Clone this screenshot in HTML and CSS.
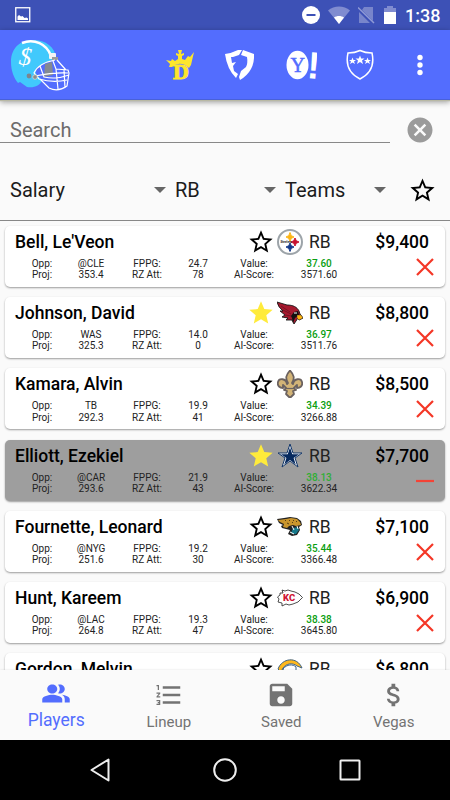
FILE: index.html
```html
<!DOCTYPE html>
<html lang="en">
  <head>
    <meta charset="utf-8" />
    <title>Players</title>
    <link rel="stylesheet" href="styles.css">
  </head>
  <body>
    <svg class="sprite">
      <symbol id="star" viewBox="0 0 24 24">
        <path d="M22 9.24l-7.19-.62L12 2 9.19 8.63 2 9.24l5.46 4.73L5.82 21 12 17.27 18.18 21l-1.63-7.03L22 9.24zM12 15.4l-3.76 2.27 1-4.28-3.32-2.88 4.38-.38L12 6.1l1.71 4.04 4.38.38-3.32 2.88 1 4.28L12 15.4z" />
      </symbol>
      <symbol id="star-full" viewBox="0 0 24 24">
        <path d="M12 17.27L18.18 21l-1.64-7.03L22 9.24l-7.19-.61L12 2 9.19 8.63 2 9.24l5.46 4.73L5.82 21z" />
      </symbol>
      <symbol id="cross" viewBox="0 0 18 18">
        <path d="M1 1L17 17M17 1L1 17" fill="none" stroke="#f43626" stroke-width="2.200" />
      </symbol>
      <symbol id="minus" viewBox="0 0 18 18">
        <path d="M0 9H18" fill="none" stroke="#f44336" stroke-width="2.200" />
      </symbol>
    </svg>

    <div class="status-bar">
      <svg class="picture" width="16" height="16" viewBox="0 0 16 16">
        <rect x=".75" y=".75" width="14" height="14" fill="none" stroke="#fff" stroke-width="1.300" />
        <path d="M2.500 13V9.500L4 8L6 9.500L7.500 9L9.500 11L11.500 10.500L13 11.500V13z" fill="#fff" />
      </svg>
      <svg width="18" height="18" viewBox="0 0 18 18">
        <circle cx="9" cy="9" r="9" fill="#fff" />
        <path d="M4.500 9H13.500" stroke="#3d51b6" stroke-width="2" />
      </svg>
      <svg width="22" height="18" viewBox="0 0 22 18">
        <path d="M11 18L0 4.500C6 -1 16 -1 22 4.500z" fill="#808cd0" />
        <path d="M11 18L6 11.500C9 9.500 13 9.500 16 11.500z" fill="#fff" />
      </svg>
      <svg width="17" height="18" viewBox="0 0 17 18">
        <path d="M6 1H15V15L4 4z M1 6L12 17H1z" fill="#7885cb" />
        <path d="M0 1.500L16 17" stroke="#8f9ad6" stroke-width="1.500" />
      </svg>
      <svg width="14" height="18" viewBox="0 0 14 18">
        <path d="M4 0H10V2H13V8H1V2H4z" fill="#808cd0" />
        <path d="M1 6H13V18H1z" fill="#fff" />
      </svg>
      <span class="clock">1:38</span>
    </div>

    <div class="app-bar">
      <svg class="helmet" width="62" height="54" viewBox="10 38 62 54">
        <path d="M11 62C11 48 20 40 33 40C46 40 55 47 56 58L43 64C35 67 34 71 37 75L42 80C40 86 34 88 27 87L20 82L18 83C14 78 11 71 11 62z" fill="#41c9fc" />
        <path d="M22 43C34 38 47 44 51 56" fill="none" stroke="#fff" stroke-width="2.500" />
        <path d="M45 64L52 62L53 75L44 77z" fill="#858a91" />
        <rect x="49" y="53" width="7" height="6" rx="1" fill="#f4f4f4" />
        <rect x="52" y="57" width="6" height="3" fill="#9b9b9b" />
        <path d="M55 60C45 62 37 66 34 73L39 79C49 82 58 82 67 80M40 66L44 77C53 79 61 78 69 75M53 61L56 69L68 70L69 73L67 86C60 91 53 90 49 88L40 79M57 60L66 70M56 69L58 89M35 76C45 74 56 72 68 73M64 70L65 88" fill="none" stroke="#fff" stroke-width="1.200" />
        <circle cx="29" cy="76" r="2.400" fill="#7e858d" />
        <circle cx="35" cy="77" r="2.300" fill="#8d8d8d" stroke="#ddd" stroke-width=".7" />
        <text x="19" y="65" class="helmet-sign" transform="rotate(6 26 57)">$</text>
      </svg>
      <div class="sites">
        <svg width="30" height="32" viewBox="0 0 30 32">
          <path d="M1 11L6 12L7 10L10 12L13 10V7L11 6V4L14 5L13 1H17L16 5L19 4V6L17 7V10L20 11L23 7L25 8L29 3L26 16L24 19Q15 11 7 18L4 18L5 15z" fill="#fde62d" />
          <text x="8" y="30" class="draft-letter">D</text>
        </svg>
        <svg width="32" height="32" viewBox="0 0 32 32">
          <path d="M1 5Q8 4 14 1L18 1L15 6L9 8L7 8L8 14L12 13L9 17L10 22L14 25L12 29Q3 20 1 5z" fill="#fff" />
          <path d="M19 1L30 5Q31 22 16 31L15 28L17 22L22 18Q24 14 23 8L17 6z" fill="#fff" />
        </svg>
        <svg width="32" height="32" viewBox="0 0 32 32">
          <ellipse cx="12.500" cy="16" rx="11" ry="14.300" fill="#fff" />
          <text x="5.500" y="23" class="yahoo-letter">Y</text>
          <text x="22" y="29.500" class="yahoo-mark" transform="rotate(5 27 20)">!</text>
        </svg>
        <svg width="28" height="32" viewBox="0 0 28 32">
          <path d="M2 4Q9 4 14 1.500Q19 4 26 4Q30 22 14 30Q-2 22 2 4z" fill="none" stroke="#fff" stroke-width="1.500" />
          <path d="M14 6.500L15.200 9.500H18.500L16 11.600L17 15L14 13L11 15L12 11.600L9.500 9.500H12.800zM6.500 8.500L7.500 11H10L8 12.600L9 15L6.500 13.500L4 15L5 12.600L3 11H5.500zM21.500 8.500L22.500 11H25L23 12.600L24 15L21.500 13.500L19 15L20 12.600L18 11H20.500z" fill="#fff" />
        </svg>
      </div>
      <svg class="more" width="6" height="22" viewBox="0 0 6 22">
        <circle cx="3" cy="3.500" r="2.700" />
        <circle cx="3" cy="11" r="2.700" />
        <circle cx="3" cy="18.500" r="2.700" />
      </svg>
    </div>

    <div class="search">
      <div class="search-field">Search</div>
      <svg width="30" height="30" viewBox="0 0 24 24">
        <path fill="#9b9b9b" d="M12 2C6.470 2 2 6.470 2 12s4.470 10 10 10 10-4.470 10-10S17.530 2 12 2zm5 13.590L15.590 17 12 13.410 8.410 17 7 15.590 10.590 12 7 8.410 8.410 7 12 10.590 15.590 7 17 8.410 13.410 12 17 15.590z" />
      </svg>
    </div>

    <div class="filters">
      <div class="dropdown">Salary</div>
      <div class="dropdown">RB</div>
      <div class="dropdown">Teams</div>
      <svg class="filter-star" width="29" height="29"><use href="#star" /></svg>
    </div>

    <div class="players" id="players"></div>

    <div class="tabs">
      <div class="tab active">
        <svg width="30" height="30" viewBox="0 0 24 24">
          <path d="M16.670 13.130C18.040 14.060 19 15.320 19 17v3h4v-3c0-2.180-3.570-3.470-6.330-3.870zM15 12c2.210 0 4-1.790 4-4s-1.790-4-4-4c-.47 0-.91.100-1.330.24C14.500 5.270 15 6.580 15 8s-.5 2.730-1.330 3.760c.42.140.86.240 1.330.240zM9 12c2.210 0 4-1.790 4-4s-1.790-4-4-4-4 1.790-4 4 1.790 4 4 4zM9 13c-2.670 0-8 1.340-8 4v3h16v-3c0-2.660-5.330-4-8-4z" transform="matrix(1 0 0 .9 0 1.600)" />
        </svg>
        <span>Players</span>
      </div>
      <div class="tab">
        <svg width="30" height="30" viewBox="0 0 24 24">
          <path d="M2 17h2v.5H3v1h1v.5H2v1h3v-4H2v1zm1-9h1V4H2v1h1v3zm-1 3h1.800L2 13.100v.9h3v-1H3.200L5 10.900V10H2v1zm5-6v2h14V5H7zm0 14h14v-2H7v2zm0-6h14v-2H7v2z" />
        </svg>
        <span>Lineup</span>
      </div>
      <div class="tab">
        <svg width="30" height="30" viewBox="0 0 24 24">
          <path d="M17 3H5c-1.110 0-2 .9-2 2v14c0 1.100.89 2 2 2h14c1.100 0 2-.9 2-2V7l-4-4zm-5 16c-1.660 0-3-1.340-3-3s1.340-3 3-3 3 1.340 3 3-1.340 3-3 3zm3-10H5V5h10v4z" />
        </svg>
        <span>Saved</span>
      </div>
      <div class="tab">
        <svg width="30" height="30" viewBox="0 0 24 24">
          <path d="M11.800 10.900c-2.270-.59-3-1.200-3-2.150 0-1.090 1.010-1.850 2.700-1.850 1.780 0 2.440.85 2.500 2.100h2.210c-.07-1.720-1.120-3.300-3.210-3.810V3h-3v2.160c-1.940.42-3.500 1.680-3.500 3.610 0 2.310 1.910 3.460 4.700 4.130 2.500.6 3 1.480 3 2.410 0 .69-.49 1.790-2.700 1.790-2.060 0-2.870-.92-2.980-2.100h-2.200c.12 2.190 1.760 3.420 3.680 3.830V21h3v-2.150c1.950-.37 3.500-1.500 3.500-3.550 0-2.840-2.430-3.810-4.700-4.400z" />
        </svg>
        <span>Vegas</span>
      </div>
    </div>

    <div class="nav-bar">
      <svg width="24" height="26" viewBox="0 0 24 26">
        <path d="M20.500 2.500V23.500L3.500 13z" />
      </svg>
      <svg width="26" height="26" viewBox="0 0 26 26">
        <circle cx="13" cy="13" r="10.800" />
      </svg>
      <svg width="24" height="26" viewBox="0 0 24 26">
        <rect x="2.500" y="3.500" width="19" height="19" rx=".5" />
      </svg>
    </div>

    <script src="script.js"></script>
  </body>
</html>
```
FILE: styles.css
```css
body {
  display: flex;
  flex-direction: column;
  width: 450px;
  height: 800px;
  margin: 0;
  overflow: hidden;
  background-color: #fafafa;
  color: #000;
  font-family: Roboto, "Liberation Sans", sans-serif;
}

svg {
  display: block;
  flex: none;
}

.sprite {
  position: absolute;
  width: 0;
  height: 0;
}

.status-bar {
  display: flex;
  flex: none;
  align-items: center;
  height: 30px;
  padding: 0 9px 0 15px;
  box-sizing: border-box;
  background-color: #3d51b6;
  color: #fff;
}

.status-bar svg {
  margin-right: 8px;
}

.status-bar .picture {
  margin-right: auto;
}

.clock {
  width: 36px;
  font-size: 18px;
  font-weight: 500;
}

.app-bar {
  z-index: 1;
  display: flex;
  flex: none;
  align-items: center;
  height: 70px;
  padding: 0 27px 0 10px;
  box-sizing: border-box;
  background-color: #536dfe;
  border-bottom: 1px solid #4961d8;
  box-shadow: 0 1px 1px #b9b9a4, 0 2px 6px rgba(0, 0, 0, 0.4);
}

.helmet-sign {
  fill: #fff;
  font: italic 25px "Liberation Serif", serif;
}

.sites {
  display: flex;
  justify-content: space-between;
  width: 209px;
  margin: 0 43px 0 auto;
}

.draft-letter {
  fill: #fde62d;
  stroke: #fde62d;
  font: bold 22px "Liberation Serif", serif;
}

.yahoo-letter {
  fill: #536dfe;
  font: 20px "Liberation Serif", serif;
  stroke: #536dfe;
  stroke-width: 0.5px;
}

.yahoo-mark {
  fill: #fff;
  font: bold 38px "Liberation Sans", sans-serif;
}

.more {
  fill: #fff;
}

.search {
  display: flex;
  flex: none;
  align-items: center;
  justify-content: space-between;
  height: 60px;
  padding-right: 15px;
}

.search-field {
  width: 380px;
  height: 24px;
  padding-left: 10px;
  border-bottom: 1px solid #888;
  color: #6c6c6c;
  font-size: 20px;
  line-height: 25px;
}

.filters {
  display: grid;
  grid-template-columns: 165px 110px 125px 29px;
  flex: none;
  align-items: center;
  height: 60px;
  padding-left: 10px;
  border-bottom: 1px solid #888;
}

.filter-star {
  margin-left: -2px;
}

.dropdown {
  display: flex;
  align-items: center;
  justify-content: space-between;
  padding-right: 9px;
  color: #1c1c1c;
  font-size: 20px;
}

.dropdown:nth-child(3) {
  padding-right: 24px;
}

.dropdown::after {
  content: "";
  border: 6px solid transparent;
  border-top-color: #666;
  border-bottom: 0;
}

.players {
  display: flex;
  flex: 1;
  flex-direction: column;
  gap: 10.2px;
  min-height: 0;
  padding: 5px 5px 0;
  overflow: hidden;
}

.player {
  flex: none;
  height: 61px;
  border-radius: 5px;
  background-color: #fff;
  box-shadow: 0 1px 2px rgba(0, 0, 0, 0.38);
}

.player.excluded {
  background-color: #9e9e9e;
}

.player-top {
  display: grid;
  grid-template-columns: 232px 30px 28px 48px 1fr;
  align-items: center;
  height: 32px;
  padding: 0 16px 0 10px;
}

.name,
.salary {
  font-size: 17.5px;
  font-weight: 500;
}

.salary {
  text-align: right;
}

.favorite.full {
  fill: #ffeb3b;
}

.team-name {
  font-size: 3px;
  font-weight: 700;
  fill: #222;
}

.team-letters {
  font-size: 9.5px;
  font-weight: 900;
  fill: #d01634;
}

.position {
  padding-left: 4px;
  color: #222;
  font-size: 17.5px;
}

.player-info {
  display: flex;
  justify-content: space-between;
  padding: 0 11px 0 12px;
}

.stats {
  display: grid;
  grid-template-columns: 50px 48px 64px 38px 74px 56px;
  color: #222;
  font-size: 10px;
  line-height: 11.2px;
  text-align: center;
}

.value {
  color: #0a9e12;
  font-weight: 500;
}

.excluded .value {
  color: #2fae35;
}

.tabs {
  z-index: 1;
  display: grid;
  grid-template-columns: repeat(4, 1fr);
  flex: none;
  height: 70px;
  background-color: #fafafa;
  box-shadow: 0 0 2px rgba(0, 0, 0, 0.12);
}

.tab {
  display: flex;
  flex-direction: column;
  align-items: center;
  padding-top: 10px;
  color: #737373;
  fill: #737373;
  font-size: 15px;
  line-height: 24px;
}

.tab.active {
  padding-top: 8px;
  color: #536dfe;
  fill: #536dfe;
  font-size: 17.5px;
}

.nav-bar {
  display: flex;
  flex: none;
  align-items: center;
  justify-content: space-between;
  height: 60px;
  padding: 0 88px;
  background-color: #000;
}

.nav-bar svg {
  fill: none;
  stroke: #eee;
  stroke-width: 2;
  stroke-linejoin: round;
}
```
FILE: script.js
```js
const logos = {
  PIT: `<svg width="26" height="26" viewBox="0 0 26 26">
    <circle cx="13" cy="13" r="12" fill="#fff" stroke="#9da4a9" stroke-width="2" />
    <path d="M13 3.5Q13.5 7.5 17 8Q13.5 8.500 13 12.5Q12.5 8.5 9 8Q12.5 7.5 13 3.5z" fill="#fdb515" stroke="#fdb515" />
    <path d="M18 9Q18.5 12.5 22 13Q18.5 13.5 18 17Q17.5 13.5 14 13Q17.5 12.5 18 9z" fill="#c8102e" stroke="#c8102e" />
    <path d="M13 14Q13.5 17.5 17 18Q13.5 18.5 13 22.5Q12.5 18.5 9 18Q12.5 17.5 13 14z" fill="#14398a" stroke="#14398a" />
    <text x="3.5" y="14" class="team-name">Steelers</text>
  </svg>`,
  ARI: `<svg width="26" height="26" viewBox="0 0 26 26">
    <path d="M0 2L10 5C16 5 20 7 22 11L23 14L26 18L24 19L22 20L21 18L17 24L15 20L9 20L11 18L5 17L8 15L3 11L6 11Q1 7 0 2z" fill="#a6192e" stroke="#171717" stroke-width=".9" />
    <path d="M4 6L13 12M6 10L14 14M8 15L14 16" stroke="#6c1020" stroke-width=".8" />
    <path d="M17 12L21 11L22 15L18 18L16 23L15 18L14 16z" fill="#111" />
    <path d="M20 15L24 15L26 18L22 20L20 18z" fill="#ffb612" stroke="#222" stroke-width=".4" />
    <path d="M17 13L20 13" stroke="#fff" />
  </svg>`,
  NO: `<svg width="26" height="28" viewBox="0 0 26 28">
    <path d="M13 0.5C17 5 18 8 15 13L16 14C17 8 24 8 25 12C26 16 23 18 20 18L20 15L17 18L19 20L16 21L17 24L13 28L9 24L10 21L7 20L9 18L6 15L6 18C3 18 0 16 1 12C2 8 9 8 10 14L11 13C8 8 9 5 13 0.5z" fill="#d3b477" stroke="#6b6260" stroke-width="1.8" stroke-linejoin="round" />
    <path d="M8 18.5H18" stroke="#6b6260" stroke-width="1.2" />
  </svg>`,
  DAL: `<svg width="26" height="26" viewBox="0 0 26 26">
    <path d="M13 1L16 10H25L18 15L21 24L13 18L5 24L8 15L1 10H10z" fill="#f4f6f8" stroke="#15396b" />
    <path d="M13 4.5L15.3 11.3H22L16.6 15L18.7 21.5L13 17L7.3 21.5L9.4 15L4 11.3H10.7z" fill="#06295e" />
  </svg>`,
  JAX: `<svg width="26" height="22" viewBox="0 0 26 22">
    <path d="M0 3L7 2L13 1L20 2L24 5L25 9L22 11L23 14L20 19L15 20L11 18L13 14L9 13L5 12L4 10L6 9L2 7z" fill="#222" />
    <path d="M1 4L9 3L14 2L20 3L23 6L24 9L19 10L16 9L12 10L10 12L6 11L7 8L3 6z" fill="#c9952c" />
    <path d="M16 12L21 11L22 14L19 18L16 18L14 17z" fill="#16788a" />
    <path d="M15 10L17 14M20 10L21 13M13 16L17 18" stroke="#fff" />
    <path d="M8 4L9 5M12 4L13 5M16 4L17 5M19 5L20 6M10 7L12 8M15 6L16 7" stroke="#3a2a10" stroke-width=".8" />
  </svg>`,
  KC: `<svg width="26" height="18" viewBox="0 0 26 18">
    <path d="M5 1L8 2L11 1L14 2L18 3L22 5L25.5 8.5L21 13L16 15L12 16L9 15L5 17L5 14L1 13L2 10L.5 8L3 6L3 4L6 4z" fill="#fff" stroke="#222" stroke-width=".8" />
    <text x="6" y="12" class="team-letters">KC</text>
  </svg>`,
  LAC: `<svg width="26" height="22" viewBox="0 0 26 22">
    <path d="M1 11C5 0 20 -2 25 10L20 8C15 4 9 6 6 10L4 14z" fill="#ffb81c" stroke="#3f6488" stroke-width="1" />
    <path d="M6 11C10 6 16 6 19 9V18H8z" fill="#fff" stroke="#3f6488" />
  </svg>`,
};

const players = [
  { name: "Bell, Le'Veon", team: "PIT", salary: "$9,400", opp: "@CLE", proj: "353.4", fppg: "24.7", rz: "78", value: "37.60", score: "3571.60" },
  { name: "Johnson, David", team: "ARI", salary: "$8,800", opp: "WAS", proj: "325.3", fppg: "14.0", rz: "0", value: "36.97", score: "3511.76", favorite: true },
  { name: "Kamara, Alvin", team: "NO", salary: "$8,500", opp: "TB", proj: "292.3", fppg: "19.9", rz: "41", value: "34.39", score: "3266.88" },
  { name: "Elliott, Ezekiel", team: "DAL", salary: "$7,700", opp: "@CAR", proj: "293.6", fppg: "21.9", rz: "43", value: "38.13", score: "3622.34", favorite: true, excluded: true },
  { name: "Fournette, Leonard", team: "JAX", salary: "$7,100", opp: "@NYG", proj: "251.6", fppg: "19.2", rz: "30", value: "35.44", score: "3366.48" },
  { name: "Hunt, Kareem", team: "KC", salary: "$6,900", opp: "@LAC", proj: "264.8", fppg: "19.3", rz: "47", value: "38.38", score: "3645.80" },
  { name: "Gordon, Melvin", team: "LAC", salary: "$6,800" },
];

const list = document.getElementById("players");

players.forEach((player) => {
  const card = document.createElement("div");
  card.className = player.excluded ? "player excluded" : "player";

  let html = `
    <div class="player-top">
      <span class="name">${player.name}</span>
      <svg class="favorite ${player.favorite ? "full" : ""}" width="28" height="28"><use href="#${player.favorite ? "star-full" : "star"}" /></svg>
      ${logos[player.team]}
      <span class="position">RB</span>
      <span class="salary">${player.salary}</span>
    </div>`;

  // the last card is cut off by the tabs and has no stats yet
  if (player.opp) {
    html += `
    <div class="player-info">
      <div class="stats">
        <span>Opp:</span><span>${player.opp}</span>
        <span>FPPG:</span><span>${player.fppg}</span>
        <span>Value:</span><span class="value">${player.value}</span>
        <span>Proj:</span><span>${player.proj}</span>
        <span>RZ Att:</span><span>${player.rz}</span>
        <span>AI-Score:</span><span>${player.score}</span>
      </div>
      <svg width="18" height="18"><use href="#${player.excluded ? "minus" : "cross"}" /></svg>
    </div>`;
  }

  card.innerHTML = html;
  list.appendChild(card);
});
```
